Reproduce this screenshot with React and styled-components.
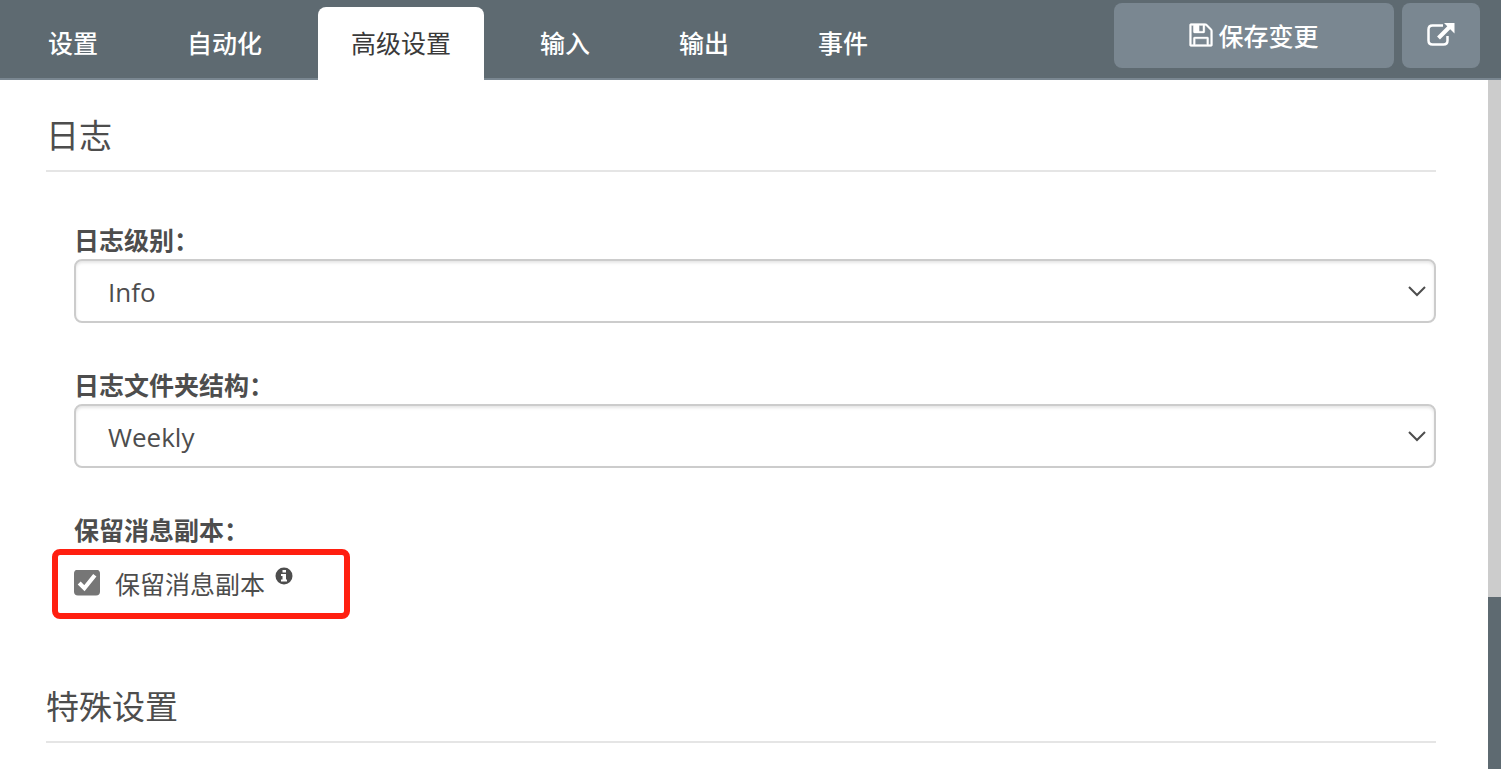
import React, { useState } from "react";
import styled, { createGlobalStyle } from "styled-components";

const tabs = ["设置", "自动化", "高级设置", "输入", "输出", "事件"];

const App = () => {
  const [active, setActive] = useState("高级设置");
  const [keepCopy, setKeepCopy] = useState(true);

  return (
    <Page>
      <GlobalStyle />
      <Header>
        <TabList>
          {tabs.map((tab) => (
            <Tab
              key={tab}
              type="button"
              $active={tab === active}
              onClick={() => setActive(tab)}
            >
              {tab}
            </Tab>
          ))}
        </TabList>
        <Actions>
          <SaveButton type="button">
            <SaveIcon />
            保存变更
          </SaveButton>
          <OpenButton type="button" aria-label="open">
            <ExternalIcon />
          </OpenButton>
        </Actions>
      </Header>
      <Body>
        <Content>
          <Title>日志</Title>
          <Fields>
            <Field>
              <Label htmlFor="level">日志级别：</Label>
              <SelectBox>
                <Select id="level" defaultValue="Info">
                  <option>Info</option>
                </Select>
                <Chevron />
              </SelectBox>
            </Field>
            <Field>
              <Label htmlFor="folder">日志文件夹结构：</Label>
              <SelectBox>
                <Select id="folder" defaultValue="Weekly">
                  <option>Weekly</option>
                </Select>
                <Chevron />
              </SelectBox>
            </Field>
            <CheckField>
              <Legend>保留消息副本：</Legend>
              <Highlight>
                <CheckLabel>
                  <Checkbox
                    type="checkbox"
                    checked={keepCopy}
                    onChange={(e) => setKeepCopy(e.target.checked)}
                  />
                  保留消息副本
                </CheckLabel>
                <InfoIcon />
              </Highlight>
            </CheckField>
          </Fields>
          <Title>特殊设置</Title>
        </Content>
        <Track>
          <Thumb />
        </Track>
      </Body>
    </Page>
  );
};

export default App;

const SaveIcon = () => (
  <svg width="24" height="24" viewBox="-32 96 1600 1600" fill="currentColor">
    <path
      stroke="currentColor"
      strokeWidth="20"
      d="M384 1536h768v-384h-768v384zm896 0h128v-896q0-14-10-38.500t-20-34.500l-281-281q-10-10-34-20t-39-10v416q0 40-28 68t-68 28h-576q-40 0-68-28t-28-68v-416h-128v1280h128v-416q0-40 28-68t68-28h832q40 0 68 28t28 68v416zm-384-928v-320q0-13-9.500-22.500t-22.500-9.500h-192q-13 0-22.500 9.500t-9.500 22.500v320q0 13 9.500 22.500t22.500 9.500h192q13 0 22.500-9.500t9.500-22.500zm640 32v928q0 40-28 68t-68 28h-1344q-40 0-68-28t-28-68v-1344q0-40 28-68t68-28h928q40 0 88 20t76 48l280 280q28 28 48 76t20 88z"
    />
    <path d="M384 256h256v384h-256z" />
  </svg>
);

const ExternalIcon = () => (
  <svg width="28" height="23" viewBox="0 0 28 23" fill="none">
    <path
      d="M16 2.500H5.500Q1.500 2.500 1.500 6.500V17.500Q1.500 21.500 5.500 21.500H16.500Q20.500 21.500 20.500 17.500V13"
      stroke="currentColor"
      strokeWidth="2.500"
    />
    <path d="M11.500 15L23 3.500" stroke="currentColor" strokeWidth="4" />
    <path d="M17 0H27.500V10.500Z" fill="currentColor" />
  </svg>
);

const Chevron = () => (
  <ChevronSvg width="18" height="12" viewBox="0 0 18 12" fill="none">
    <path d="M1 2L9 10L17 2" stroke="currentColor" strokeWidth="2" />
  </ChevronSvg>
);

const InfoIcon = () => (
  <InfoSvg width="18" height="18" viewBox="0 0 18 18">
    <circle cx="9" cy="9" r="8.500" fill="currentColor" />
    <path d="M7.500 3H11V5.500H7.500ZM6 7H11V12.500H12V14.500H6V12.500H7.500V9H6Z" fill="#fff" />
  </InfoSvg>
);

const GlobalStyle = createGlobalStyle`
  * {
    box-sizing: border-box;
  }
  body {
    margin: 0;
    color: #4d4d4d;
    background-color: #fff;
    font-family: "Open Sans", "Noto Sans CJK SC", sans-serif;
    font-size: 25px;
  }
  button,
  select {
    font: inherit;
    color: inherit;
  }
`;

const Page = styled.div`
  display: flex;
  flex-direction: column;
  height: 100vh;
  overflow: hidden;
`;

const Header = styled.header`
  display: flex;
  justify-content: space-between;
  height: 80px;
  flex-shrink: 0;
  padding: 0 21px 0 15px;
  background-color: #5e6a71;
  box-shadow: inset 0 -2px #7a8791;
`;

const TabList = styled.nav`
  display: flex;
  gap: 23px;
  padding-top: 7px;
`;

const Tab = styled.button`
  padding: 0 33px 3px;
  border: 0;
  border-radius: 8px 8px 0 0;
  background-color: ${({ $active }) => ($active ? "#fff" : "transparent")};
  color: ${({ $active }) => ($active ? "#3a3a3a" : "#fff")};
  font-weight: ${({ $active }) => ($active ? 400 : 500)};
  cursor: pointer;
`;

const Actions = styled.div`
  display: flex;
  gap: 8px;
  padding: 3px 0 12px;
`;

const ActionButton = styled.button`
  display: flex;
  align-items: center;
  justify-content: center;
  gap: 5px;
  padding: 0 0 2px;
  border: 0;
  border-radius: 8px;
  background-color: #7a8791;
  color: #fff;
  font-weight: 500;
  cursor: pointer;
`;

const SaveButton = styled(ActionButton)`
  width: 280px;
`;

const OpenButton = styled(ActionButton)`
  width: 78px;
`;

const Body = styled.div`
  display: flex;
  flex: 1;
  min-height: 0;
`;

const Content = styled.main`
  flex: 1;
  padding: 32px 52px 0 46px;
`;

const Track = styled.div`
  width: 13px;
  background-color: #5e6a71;
`;

const Thumb = styled.div`
  height: 75%;
  background-color: #ccc;
`;

const Title = styled.h2`
  margin: 0;
  padding-bottom: 10px;
  border-bottom: 2px solid #e5e5e5;
  font-size: 33px;
  font-weight: 400;
  line-height: 48px;
`;

const Fields = styled.div`
  display: flex;
  flex-direction: column;
  gap: 45px;
  padding: 51px 0 64px 28px;
`;

const Field = styled.div`
  display: flex;
  flex-direction: column;
`;

const Label = styled.label`
  padding-bottom: 2px;
  font-weight: 700;
  line-height: 34px;
`;

const SelectBox = styled.div`
  display: grid;
  align-items: center;
  > * {
    grid-area: 1 / 1;
  }
`;

const Select = styled.select`
  appearance: none;
  width: 100%;
  height: 64px;
  padding: 2px 32px 0;
  border: 2px solid #ccc;
  border-radius: 8px;
  background-color: #fff;
  box-shadow: inset 0 2px 3px rgba(0, 0, 0, 0.1);
  font-size: 26px;
`;

const ChevronSvg = styled.svg`
  justify-self: end;
  margin-right: 10px;
  pointer-events: none;
`;

const CheckField = styled.fieldset`
  margin: 0;
  padding: 0;
  border: 0;
`;

const Legend = styled.legend`
  padding: 0 0 2px;
  font-weight: 700;
  line-height: 34px;
`;

const Highlight = styled.div`
  display: flex;
  width: 298px;
  height: 70px;
  margin-left: -22px;
  padding: 0 16px 3px;
  border: 6px solid #ff1f10;
  border-radius: 8px;
`;

const CheckLabel = styled.label`
  display: flex;
  align-items: center;
  gap: 15px;
`;

const Checkbox = styled.input`
  width: 26px;
  height: 26px;
  margin: 0;
  accent-color: #767676;
  clip-path: inset(0 round 4px);
`;

const InfoSvg = styled.svg`
  margin: 12px 0 0 10px;
`;
